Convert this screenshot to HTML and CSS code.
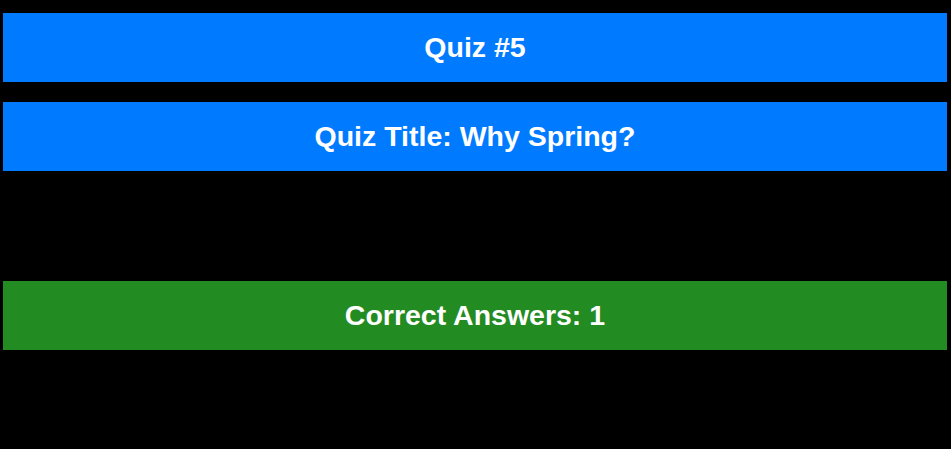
FILE: index.html
```html
<!DOCTYPE html>
<html>
<head>
<meta charset="utf-8">
<link rel="stylesheet" href="styles.css">
</head>
<body>
<div class="page">
  <h2 class="bar bar-blue">Quiz #5</h2>
  <h2 class="bar bar-blue">Quiz Title: Why Spring?</h2>
  <div class="spacer"></div>
  <h2 class="bar bar-green">Correct Answers: 1</h2>
</div>
</body>
</html>
```
FILE: styles.css
```css
html, body {
  margin: 0;
  padding: 0;
  background: #000;
}
.page {
  display: flex;
  flex-direction: column;
  gap: 20px;
  padding: 13px 4px 0 3px;
}
.bar {
  margin: 0;
  height: 69px;
  display: flex;
  align-items: center;
  justify-content: center;
  font-family: "Liberation Sans", Arial, sans-serif;
  font-weight: bold;
  font-size: 28.5px;
  color: #fff;
}
.bar-blue {
  background: #007bff;
}
.bar-green {
  background: #228b22;
}
.spacer {
  height: 70px;
}
```
